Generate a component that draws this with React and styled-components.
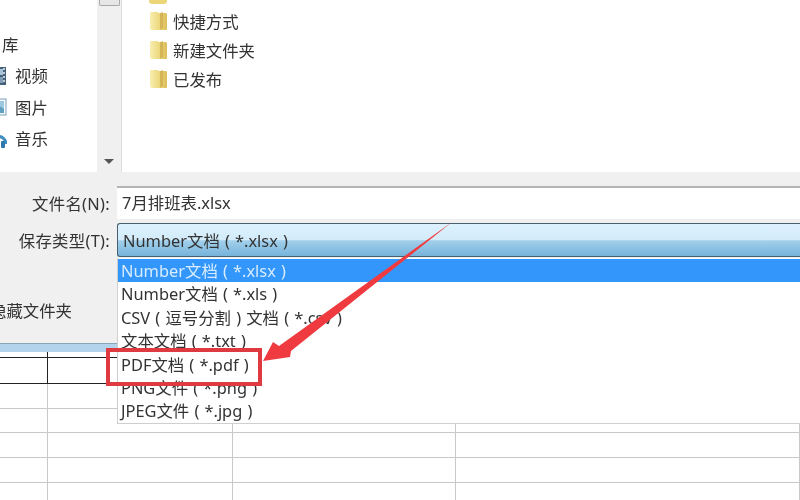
import React from 'react';
import styled, { createGlobalStyle } from 'styled-components';

const GlobalStyle = createGlobalStyle`
  html, body {
    margin: 0;
    padding: 0;
    background: #fff;
  }
`;

const Page = styled.div`
  position: relative;
  width: 800px;
  height: 500px;
  overflow: hidden;
  background: #fff;
  color: #333;
  font-family: 'Noto Sans', 'Noto Sans CJK SC', sans-serif;
  font-size: 16.4px;
  filter: blur(0.4px);
`;

const Browser = styled.div`
  display: flex;
  height: 172px;
`;

const NavPane = styled.div`
  width: 97px;
  padding-top: 29px;
  box-sizing: border-box;
  overflow: hidden;
`;

const NavRow = styled.div`
  display: flex;
  align-items: center;
  gap: 8px;
  height: 31.4px;
  line-height: 31.4px;
  padding-left: ${(p) => (p.$group ? '2px' : '0')};
  white-space: nowrap;
`;

const NavIcon = styled.svg`
  width: 18px;
  height: 20px;
  margin-left: -11px;
  flex: none;
`;

const Scrollbar = styled.div`
  position: relative;
  width: 24px;
  background: #f0f0f0;
  border-right: 1px solid #dedede;
  display: flex;
  flex-direction: column;
  align-items: center;
  justify-content: space-between;
`;

const Thumb = styled.div`
  width: 21px;
  height: 6px;
  background: #e6e6e6;
  border: 1px solid #a8a8a8;
  border-top: 0;
  border-radius: 0 0 2px 2px;
  box-sizing: border-box;
`;

const ArrowDown = styled.div`
  width: 0;
  height: 0;
  margin-bottom: 8px;
  border-left: 5px solid transparent;
  border-right: 5px solid transparent;
  border-top: 5px solid #555;
`;

const FileList = styled.div`
  flex: 1;
  padding: 6px 0 0 27px;
`;

const FileRow = styled.div`
  display: flex;
  align-items: center;
  gap: 5px;
  height: 29px;
`;

const PartialFolder = styled.div`
  position: absolute;
  top: 0;
  left: 149px;
  width: 18px;
  height: 4px;
  background: #ecd677;
  border-radius: 0 0 3px 3px;
`;

const FormPanel = styled.div`
  height: 171px;
  box-sizing: border-box;
  background: #f0f0f0;
  padding-top: 14px;
`;

const Field = styled.div`
  display: flex;
  align-items: center;
  margin-bottom: ${(p) => p.$gap || 0}px;
`;

const Label = styled.div`
  width: 110px;
  margin-right: 7px;
  text-align: right;
  flex: none;
  white-space: nowrap;
  letter-spacing: 0.3px;
`;

const Input = styled.div`
  flex: 1;
  height: 33px;
  line-height: 30px;
  box-sizing: border-box;
  padding-left: 5px;
  background: #fff;
  border-top: 2px solid #b4b4b4;
`;

const Select = styled.div`
  flex: 1;
  height: 34px;
  line-height: 33px;
  box-sizing: border-box;
  padding-left: 5px;
  word-spacing: 0.9px;
  border: 1px solid #46606f;
  border-right: 0;
  border-radius: 3px 0 0 3px;
  background: linear-gradient(#dcf1fd 0, #d3ebfa 50%, #a3d0ec 52%, #76b3da 100%);
`;

const HiddenToggle = styled.div`
  margin: 42px 0 0 -10px;
  white-space: nowrap;
  line-height: 24px;
`;

const Strip = styled.div`
  height: 9px;
  background: linear-gradient(90deg, #b3d3ec 0, #b3d3ec 15%, #cfe0ee 20%, #b3d3ec 25%, #bdd8ee 100%);
  border-top: 1px solid #8aa4b8;
  box-sizing: border-box;
`;

const Sheet = styled.div`
  display: grid;
  grid-template-columns: 48px 185px 223px 1fr;
  grid-template-rows: 6px 26px 25px 24px 25px 25px 18px;
`;

const Cell = styled.div`
  box-sizing: border-box;
  border-right: ${(p) => (p.$darkRight ? '1.5px solid #222' : '1px solid #c8c8c8')};
  border-bottom: ${(p) => (p.$darkBottom ? '1.5px solid #222' : '1px solid #c8c8c8')};
`;

const Dropdown = styled.div`
  position: absolute;
  top: 258px;
  left: 117px;
  right: 0;
  background: #fff;
  border-left: 1px solid #cfcfcf;
  border-bottom: 1px solid #cfcfcf;
  padding-top: 1px;
`;

const Option = styled.div`
  height: 23.4px;
  line-height: 23.4px;
  padding-left: 3px;
  white-space: nowrap;
  word-spacing: 0.9px;
  background: ${(p) => (p.$active ? '#3296fb' : 'transparent')};
  color: ${(p) => (p.$active ? '#d8ecff' : '#333')};
`;

const RedBox = styled.div`
  position: absolute;
  left: 106px;
  top: 348px;
  width: 156px;
  height: 38px;
  box-sizing: border-box;
  border: 4px solid #df3a40;
`;

const ArrowMark = styled.svg`
  position: absolute;
  left: 0;
  top: 0;
  width: 800px;
  height: 500px;
  pointer-events: none;
`;

const Folder = () => (
  <svg width="19" height="20" viewBox="0 0 19 20">
    <defs>
      <linearGradient id="folderFill" x1="0" y1="0" x2="1" y2="0">
        <stop offset="0" stopColor="#f8eeb0" />
        <stop offset="0.6" stopColor="#ecd67a" />
        <stop offset="1" stopColor="#dcbc58" />
      </linearGradient>
    </defs>
    <path d="M1 2 Q1 1 2 1 L8 1 L10 2 L17 2 Q18 2 18 4 L18 18 Q18 19 17 19 L3 19 Q1 19 1 17 Z" fill="url(#folderFill)" />
    <path d="M11 2 L14 1 L14 17 L11 19 Z" fill="#c9a94c" opacity="0.7" />
  </svg>
);

const VideoIcon = () => (
  <NavIcon viewBox="0 0 18 20">
    <rect x="1" y="1" width="16" height="18" fill="#46617a" />
    <rect x="4" y="3" width="10" height="6" fill="#a8c4d8" />
    <rect x="4" y="11" width="10" height="6" fill="#7f9fb8" />
    <path d="M15 2v2M15 6v2M15 10v2M15 14v2" stroke="#e8edf0" strokeWidth="1.5" />
  </NavIcon>
);

const PictureIcon = () => (
  <NavIcon viewBox="0 0 18 20">
    <rect x="1" y="2" width="16" height="16" fill="#f4f8fb" stroke="#7da3bd" />
    <rect x="3" y="4" width="12" height="12" fill="#9cc7e0" />
    <path d="M3 16 L3 12 L10 9 L15 12 L15 16 Z" fill="#5f9fbf" />
  </NavIcon>
);

const MusicIcon = () => (
  <NavIcon viewBox="0 0 18 20">
    <path d="M2 15 A7.5 7.5 0 1 1 17 15" fill="none" stroke="#3d8cc4" strokeWidth="3" />
    <rect x="12" y="12" width="4" height="7" rx="1" fill="#2f78ae" />
  </NavIcon>
);

const folders = ['快捷方式', '新建文件夹', '已发布'];

const options = [
  'Number文档 ( *.xlsx )',
  'Number文档 ( *.xls )',
  'CSV ( 逗号分割 ) 文档 ( *.csv )',
  '文本文档 ( *.txt )',
  'PDF文档 ( *.pdf )',
  'PNG文件 ( *.png )',
  'JPEG文件 ( *.jpg )',
];

const sheetRows = [0, 1, 2, 3, 4, 5, 6];
const sheetCols = [0, 1, 2, 3];

export default function App() {
  return (
    <Page>
      <GlobalStyle />
      <Browser>
        <NavPane>
          <NavRow $group>库</NavRow>
          <NavRow><VideoIcon />视频</NavRow>
          <NavRow><PictureIcon />图片</NavRow>
          <NavRow><MusicIcon />音乐</NavRow>
        </NavPane>
        <Scrollbar>
          <Thumb />
          <ArrowDown />
        </Scrollbar>
        <FileList>
          {folders.map((name) => (
            <FileRow key={name}>
              <Folder />
              {name}
            </FileRow>
          ))}
        </FileList>
      </Browser>
      <PartialFolder />

      <FormPanel>
        <Field $gap={4}>
          <Label>文件名(N):</Label>
          <Input>7月排班表.xlsx</Input>
        </Field>
        <Field>
          <Label>保存类型(T):</Label>
          <Select>Number文档 ( *.xlsx )</Select>
        </Field>
        <HiddenToggle>隐藏文件夹</HiddenToggle>
      </FormPanel>
      <Strip />

      <Sheet>
        {sheetRows.map((r) =>
          sheetCols.map((c) => (
            <Cell
              key={`${r}-${c}`}
              $darkRight={r < 2 && c === 0}
              $darkBottom={r < 2}
            />
          ))
        )}
      </Sheet>

      <Dropdown>
        {options.map((text, i) => (
          <Option key={text} $active={i === 0}>{text}</Option>
        ))}
      </Dropdown>

      <RedBox />
      <ArrowMark viewBox="0 0 800 500">
        <path
          d="M452 222 L291 351 L290 357 L263 361 L273 342 L279 346 Z"
          fill="#ef3b3f"
        />
      </ArrowMark>
    </Page>
  );
}
